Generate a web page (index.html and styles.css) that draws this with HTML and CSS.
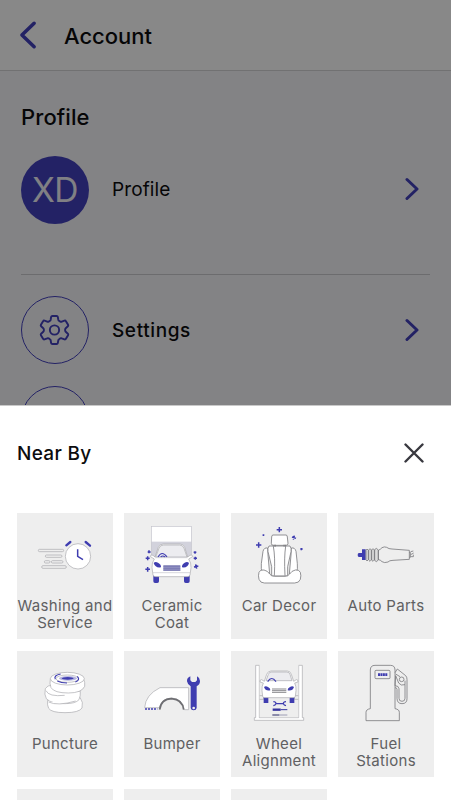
FILE: index.html
```html
<!DOCTYPE html>
<html lang="en">
<head>
  <meta charset="UTF-8" />
  <meta name="viewport" content="width=device-width, initial-scale=1.0" />
  <title>Account</title>
  <link rel="stylesheet" href="styles.css">
</head>
<body>
  <header class="topbar">
    <svg class="back" viewBox="0 0 20 32"><path d="M16 3.5 3 16 16 28.5" /></svg>
    <h1>Account</h1>
  </header>
  <main class="account">
    <h2>Profile</h2>
    <div class="row profile">
      <div class="avatar">XD</div>
      <span>Profile</span>
      <svg class="chevron" viewBox="0 0 14 24"><path d="M2 2.5 12 12 2 21.5" /></svg>
    </div>
    <div class="row settings">
      <div class="ring">
        <svg class="gear" viewBox="0 0 32 32">
          <path d="M12.5 2.5Q12.8 1.5 13.8 1.5H18.2Q19.2 1.5 19.4 2.5L20 5.6Q20.2 6.3 21 6.7L22 7.3Q22.8 7.7 23.5 7.3L26.3 6.3Q27.3 6 27.8 6.9L30 10.6Q30.5 11.5 29.8 12.2L27.6 14.1Q27 14.7 27 15.5V16.5Q27 17.3 27.6 17.9L29.8 19.8Q30.5 20.5 30 21.4L27.8 25.1Q27.3 26 26.3 25.7L23.5 24.7Q22.8 24.3 22 24.7L21 25.3Q20.2 25.7 20 26.4L19.4 29.5Q19.2 30.5 18.2 30.5H13.8Q12.8 30.5 12.5 29.5L12 26.4Q11.8 25.7 11 25.3L10 24.7Q9.2 24.3 8.5 24.7L5.7 25.7Q4.7 26 4.2 25.1L2 21.4Q1.5 20.5 2.2 19.8L4.4 17.9Q5 17.3 5 16.5V15.5Q5 14.7 4.4 14.1L2.2 12.2Q1.5 11.5 2 10.6L4.2 6.9Q4.7 6 5.7 6.3L8.5 7.3Q9.2 7.7 10 7.3L11 6.7Q11.8 6.3 12 5.6Z" />
          <circle cx="16" cy="16" r="4.8" />
        </svg>
      </div>
      <span>Settings</span>
      <svg class="chevron" viewBox="0 0 14 24"><path d="M2 2.5 12 12 2 21.5" /></svg>
    </div>
    <div class="row">
      <div class="ring"></div>
    </div>
  </main>

  <div class="overlay"></div>

  <section class="sheet">
    <div class="sheet-head">
      <h3>Near By</h3>
      <svg class="close" viewBox="0 0 20 20"><path d="M1.5 1.5 18.5 18.5M18.5 1.5 1.5 18.5" /></svg>
    </div>
    <div class="grid">
      <div class="card">
        <svg class="icon" viewBox="21 24 288 240">
          <g class="line">
            <rect x="85" y="133" width="76" height="7" rx="3.5" />
            <rect x="106" y="150" width="50" height="7" rx="3.5" />
            <rect x="103" y="167" width="17" height="7" rx="3.5" />
            <rect x="124" y="167" width="35" height="7" rx="3.5" />
            <rect x="95" y="182" width="74" height="8" rx="4" />
            <circle class="white" cx="204" cy="154" r="38" />
          </g>
          <path class="blue-line thick" d="M203 133V154L219 164" />
          <path class="blue-line thicker" d="M169 121 181 111M227 111 240 122" />
        </svg>
        <p>Washing and<br>Service</p>
      </div>
      <div class="card">
        <svg class="icon" viewBox="18 24 288 240">
          <defs>
            <pattern id="stripes" width="3" height="4" patternUnits="userSpaceOnUse">
              <path d="M1 0V4" stroke="#9c9cb8" stroke-width="1" />
            </pattern>
          </defs>
          <rect class="white" x="100" y="64" width="120" height="46" />
          <rect x="100" y="110" width="120" height="45" fill="url(#stripes)" />
          <rect class="line faint" x="100" y="64" width="120" height="90" />
          <path class="blue" d="M106 208H123V229Q123 234 118 234H111Q106 234 106 229ZM198 208H215V229Q215 234 210 234H203Q198 234 198 229Z" />
          <path class="line white" d="M111 156 121 127Q125 117 136 117H186Q196 117 200 127L209 156 216 151Q223 148 225 154L217 159 212 162Q220 173 219 188L216 210Q215 215 208 215H113Q106 215 105 210L102 188Q101 173 109 162L104 159 96 154Q98 148 105 151Z" />
          <path class="line grey" d="M113 156 123 130Q126 120 137 120H185Q194 120 198 130L207 156Z" />
          <path class="blue-line" d="M120 156Q132 135 147 156M128 156Q134 150 141 156" />
          <path class="line faint" d="M111 158H209M105 203H216" />
          <path class="blue" d="M107 174Q112 168 120 173 130 178 129 187 112 190 107 174ZM213 174Q208 168 200 173 191 178 192 187 209 190 213 174Z" />
          <rect x="136" y="180" width="51" height="18" fill="#9a9ac4" />
          <path d="M136 185H187M136 190H187M136 195H187" stroke="#6666ac" stroke-width="2" />
          <path class="blue-line thick" d="M93 136V145M89 141H98M89 154V166M83 160H95M89 186V200M82 193H96M231 139V146M227 142H235M232 155V164M227 160H237M233 178 236 191M228 186 241 183" />
        </svg>
        <p>Ceramic<br>Coat</p>
      </div>
      <div class="card">
        <svg class="icon" viewBox="18 24 288 240">
          <g class="dark white">
            <path d="M128 129Q117 127 114 139L109 176Q107 193 113 202L134 207 129 150ZM199 129Q210 127 213 139L217 176Q219 193 214 202L193 207 198 150Z" />
            <path d="M132 123Q127 130 129 140L140 185V213H188V185L198 140Q200 130 195 123Z" />
            <path d="M145 124Q151 155 148 212M182 124Q177 155 180 212" />
            <path d="M144 90H183Q187 90 187 96L189 115Q189 121 183 121H145Q139 121 139 115L140 96Q140 90 144 90Z" />
            <path d="M147 119V125M151 119V125M177 119V125M181 119V125" />
            <path d="M102 202Q105 193 117 195 128 197 135 208 139 214 148 214H180Q189 214 193 208 200 197 211 195 222 193 226 202 229 212 226 223 222 234 209 234H118Q106 234 102 223 99 212 102 202Z" />
          </g>
          <path class="blue-line thick" d="M163 66V82M155 74H171M101 112V128M93 120H109M208 92 205 104M201 96 213 100M115 88V93M113 90H118M229 129V136M226 132H233" />
        </svg>
        <p>Car Decor</p>
      </div>
      <div class="card">
        <svg class="icon" viewBox="19 24 288 240">
          <path class="blue" d="M91 133H102V165H91V156H82Q78 156 78 150T82 144H91Z" />
          <g class="dark" fill="#ddd">
            <path d="M103 136 106 132 110 136V164L106 168 103 164ZM111 135 115 131 119 135V165L115 169 111 165ZM120 135 124 131 128 135V165L124 169 120 165ZM129 134 134 130 140 135V165L134 170 129 166Z" />
          </g>
          <path class="dark" d="M140 136Q147 133 151 128 158 124 165 127 171 132 181 132L233 136V163L184 166Q173 166 169 171 158 175 151 170 146 164 140 164ZM233 142H236V157H233M237 140 245 138M237 155H245V149M237 149 246 144" />
        </svg>
        <p>Auto Parts</p>
      </div>
      <div class="card">
        <svg class="icon" viewBox="21 18 288 240">
          <g class="line white">
            <path d="M113 166Q111 181 116 190 124 203 165 203 207 203 216 189 221 172 210 157Z" />
            <path d="M106 131Q113 120 125 121L211 139Q212 153 207 164 197 176 165 176 124 177 109 161 102 149 106 131Z" />
            <path d="M108 137Q116 156 164 151M116 171Q142 184 197 168M121 102Q118 116 123 128 133 144 175 144 215 144 224 124 226 112 220 100Z" />
            <ellipse cx="172" cy="101" rx="51" ry="19" />
            <ellipse cx="172" cy="101" rx="34" ry="11" />
          </g>
          <path class="blue-line" d="M136 103Q130 91 152 87M202 94Q212 105 196 111M142 108Q153 114 171 114" />
          <ellipse cx="174" cy="100" rx="27" ry="7" fill="#b7b7e0" />
          <ellipse class="blue" cx="173" cy="100" rx="18" ry="4" />
        </svg>
        <p>Puncture</p>
      </div>
      <div class="card">
        <svg class="icon" viewBox="18 18 288 240">
          <path class="line white" d="M80 188Q82 150 126 128H212V194H199Q193 160 160 159 130 161 124 188Z" />
          <path d="M125 194Q129 162 161 161 193 163 197 194Z" fill="#eee" />
          <path d="M125 194Q129 162 161 161 193 163 197 194" fill="none" stroke="#6e6e72" stroke-width="5" />
          <path d="M81 192H118" fill="none" stroke="#3f3db0" stroke-width="5" stroke-dasharray="6 3" />
          <path class="blue" d="M217 94Q206 99 207 109 209 120 218 124V189Q219 196 227 196 235 196 236 189V124Q246 119 246 108 245 98 237 94V106L232 111H222L217 106Z" />
          <circle cx="227" cy="189" r="4" fill="#eee" />
        </svg>
        <p>Bumper</p>
      </div>
      <div class="card">
        <svg class="icon" viewBox="18 18 288 240">
          <path class="line white" d="M92 61H103V218H221V61H232V218H236V226H88V218H92Z" />
          <path d="M104 60H220V217H104Z" fill="#eee" />
          <path class="line" d="M104 152H116V163H104M220 152H208V163H220" />
          <path class="blue" d="M116 153H130V174H116ZM194 153H208V174H194Z" />
          <path class="line white" d="M118 109 125 88Q129 78 138 78H187Q196 78 199 88L206 109 214 104Q220 103 219 111L209 114Q214 124 213 137L211 154Q210 158 205 158H119Q114 158 113 154L111 137Q110 124 115 114L105 111Q104 103 110 104Z" />
          <path class="line grey" d="M123 107 130 88Q132 81 140 81H185Q193 81 195 88L201 107Z" />
          <path class="blue-line" d="M128 110Q140 91 153 110" />
          <path class="blue" d="M117 126Q122 122 129 126 137 130 136 136 121 139 117 126ZM207 126Q202 122 195 126 187 130 188 136 203 139 207 126Z" />
          <path d="M141 132H184M141 137H184M141 142H184" stroke="#88888c" stroke-width="3" />
          <path class="blue-line" d="M145 170Q153 170 153 176 151 181 145 182M183 170Q175 170 175 176 177 181 183 182M153 176H175" />
          <path d="M143 194H167" stroke="#34329e" stroke-width="7" />
          <path d="M167 194H187" stroke="#34329e" stroke-width="3" />
          <path d="M142 210H163" stroke="#77779c" stroke-width="5" />
          <path d="M163 210H187" stroke="#77779c" stroke-width="2" />
        </svg>
        <p>Wheel<br>Alignment</p>
      </div>
      <div class="card">
        <svg class="icon" viewBox="19 18 288 240">
          <g class="dark">
            <path d="M103 227V202Q103 193 116 191V75Q116 61 130 61H176Q190 61 190 75V191Q203 193 203 202V227Z" />
            <rect x="130" y="76" width="45" height="25" rx="3" />
            <path d="M190 83 197 72 222 92Q226 96 226 103V161Q226 176 211 176 197 176 196 161V133Q196 128 190 128M190 122Q201 122 202 131V160Q202 169 211 169 220 169 220 160V119L209 120 201 114 192 92ZM192 87 205 95M220 119V107" />
            <circle cx="210" cy="103" r="7" />
          </g>
          <path d="M139 89H167" fill="none" stroke="#3f3db0" stroke-width="8" stroke-dasharray="6 1.3" />
        </svg>
        <p>Fuel<br>Stations</p>
      </div>
      <div class="card"></div>
      <div class="card"></div>
      <div class="card"></div>
    </div>
  </section>
</body>
</html>
```

FILE: styles.css
```css
* {
  box-sizing: border-box;
}
body {
  margin: 0;
  height: 800px;
  overflow: hidden;
  position: relative;
  font-family: Inter, "Liberation Sans", sans-serif;
  background: #f6f6fa;
  color: #0c0c0e;
}
h1, h2, h3, p {
  margin: 0;
  font-weight: 500;
}
svg {
  display: block;
  flex: none;
}
.topbar {
  display: flex;
  align-items: center;
  height: 71px;
  padding-left: 19px;
  background: #fff;
  border-bottom: 1px solid #d4d4d6;
}
.topbar h1 {
  margin: 1px 0 0 26px;
  font-size: 22px;
  letter-spacing: 0;
}
.back {
  width: 19px;
  height: 30px;
}
.back path, .chevron path {
  fill: none;
  stroke: #4340bc;
  stroke-width: 3;
  stroke-linecap: round;
  stroke-linejoin: round;
}
.back path {
  stroke-width: 3.8;
}
.account {
  padding: 32px 21px 0;
}
.account h2 {
  height: 53px;
  font-size: 22px;
  line-height: 28px;
  letter-spacing: 0.1px;
}
.row {
  display: flex;
  align-items: center;
  height: 90px;
  font-size: 19px;
  font-weight: 500;
  letter-spacing: 0.6px;
}
.row.profile {
  align-items: flex-start;
  height: 119px;
  line-height: 67px;
  border-bottom: 1px solid #cacace;
  font-weight: 400;
  letter-spacing: 0.1px;
}
.row.settings {
  margin-top: 10px;
}
.row span {
  flex: 1;
  margin-left: 23px;
}
.avatar, .ring {
  display: flex;
  flex: none;
  align-items: center;
  justify-content: center;
  width: 68px;
  height: 68px;
  border-radius: 50%;
}
.avatar {
  background: #4340be;
  color: #f1f1f7;
  font-size: 33.5px;
  letter-spacing: -0.5px;
}
.ring {
  border: 1.5px solid #4340be;
}
.gear {
  width: 31px;
  height: 32px;
  margin-right: 1px;
  fill: none;
  stroke: #4340be;
  stroke-width: 2;
}
.chevron {
  width: 14px;
  height: 24px;
  margin-right: 11px;
}
.profile .chevron {
  margin-top: 21px;
}
.overlay {
  position: absolute;
  inset: 0;
  background: rgba(0, 0, 0, 0.467);
}
.sheet {
  position: absolute;
  left: 0;
  right: 0;
  bottom: 0;
  height: 395px;
  overflow: hidden;
  border-top: 1px solid #c9c9c9;
  background: #fff;
}
.sheet-head {
  display: flex;
  align-items: center;
  justify-content: space-between;
  height: 107px;
  padding: 0 27px 13px 17px;
}
.sheet-head h3 {
  font-size: 19px;
  letter-spacing: 0.3px;
}
.close {
  width: 20px;
  height: 20px;
  fill: none;
  stroke: #38383f;
  stroke-width: 2.4;
  stroke-linecap: round;
}
.grid {
  display: grid;
  grid-template-columns: repeat(4, 96px);
  grid-auto-rows: 126px;
  gap: 12px 11px;
  padding-left: 17px;
}
.card {
  background: #eee;
  color: #606062;
  text-align: center;
}
.card p {
  margin: 4px -2px 0;
  font-size: 15px;
  font-weight: 400;
  line-height: 17px;
  letter-spacing: 0.3px;
}
.icon {
  width: 96px;
  height: 80px;
  fill: none;
}
.line {
  stroke: #a8a8ac;
  stroke-width: 2;
}
.faint {
  stroke: #c4c4cc;
}
.dark {
  stroke: #77777b;
  stroke-width: 2.4;
}
.white {
  fill: #fff;
}
.grey {
  fill: #ececf0;
}
.blue {
  fill: #3f3db0;
}
.blue-line {
  stroke: #3f3db0;
  stroke-width: 3.5;
}
.thick {
  stroke-width: 4.5;
}
.thicker {
  stroke-width: 7;
  stroke-linecap: round;
}
```
